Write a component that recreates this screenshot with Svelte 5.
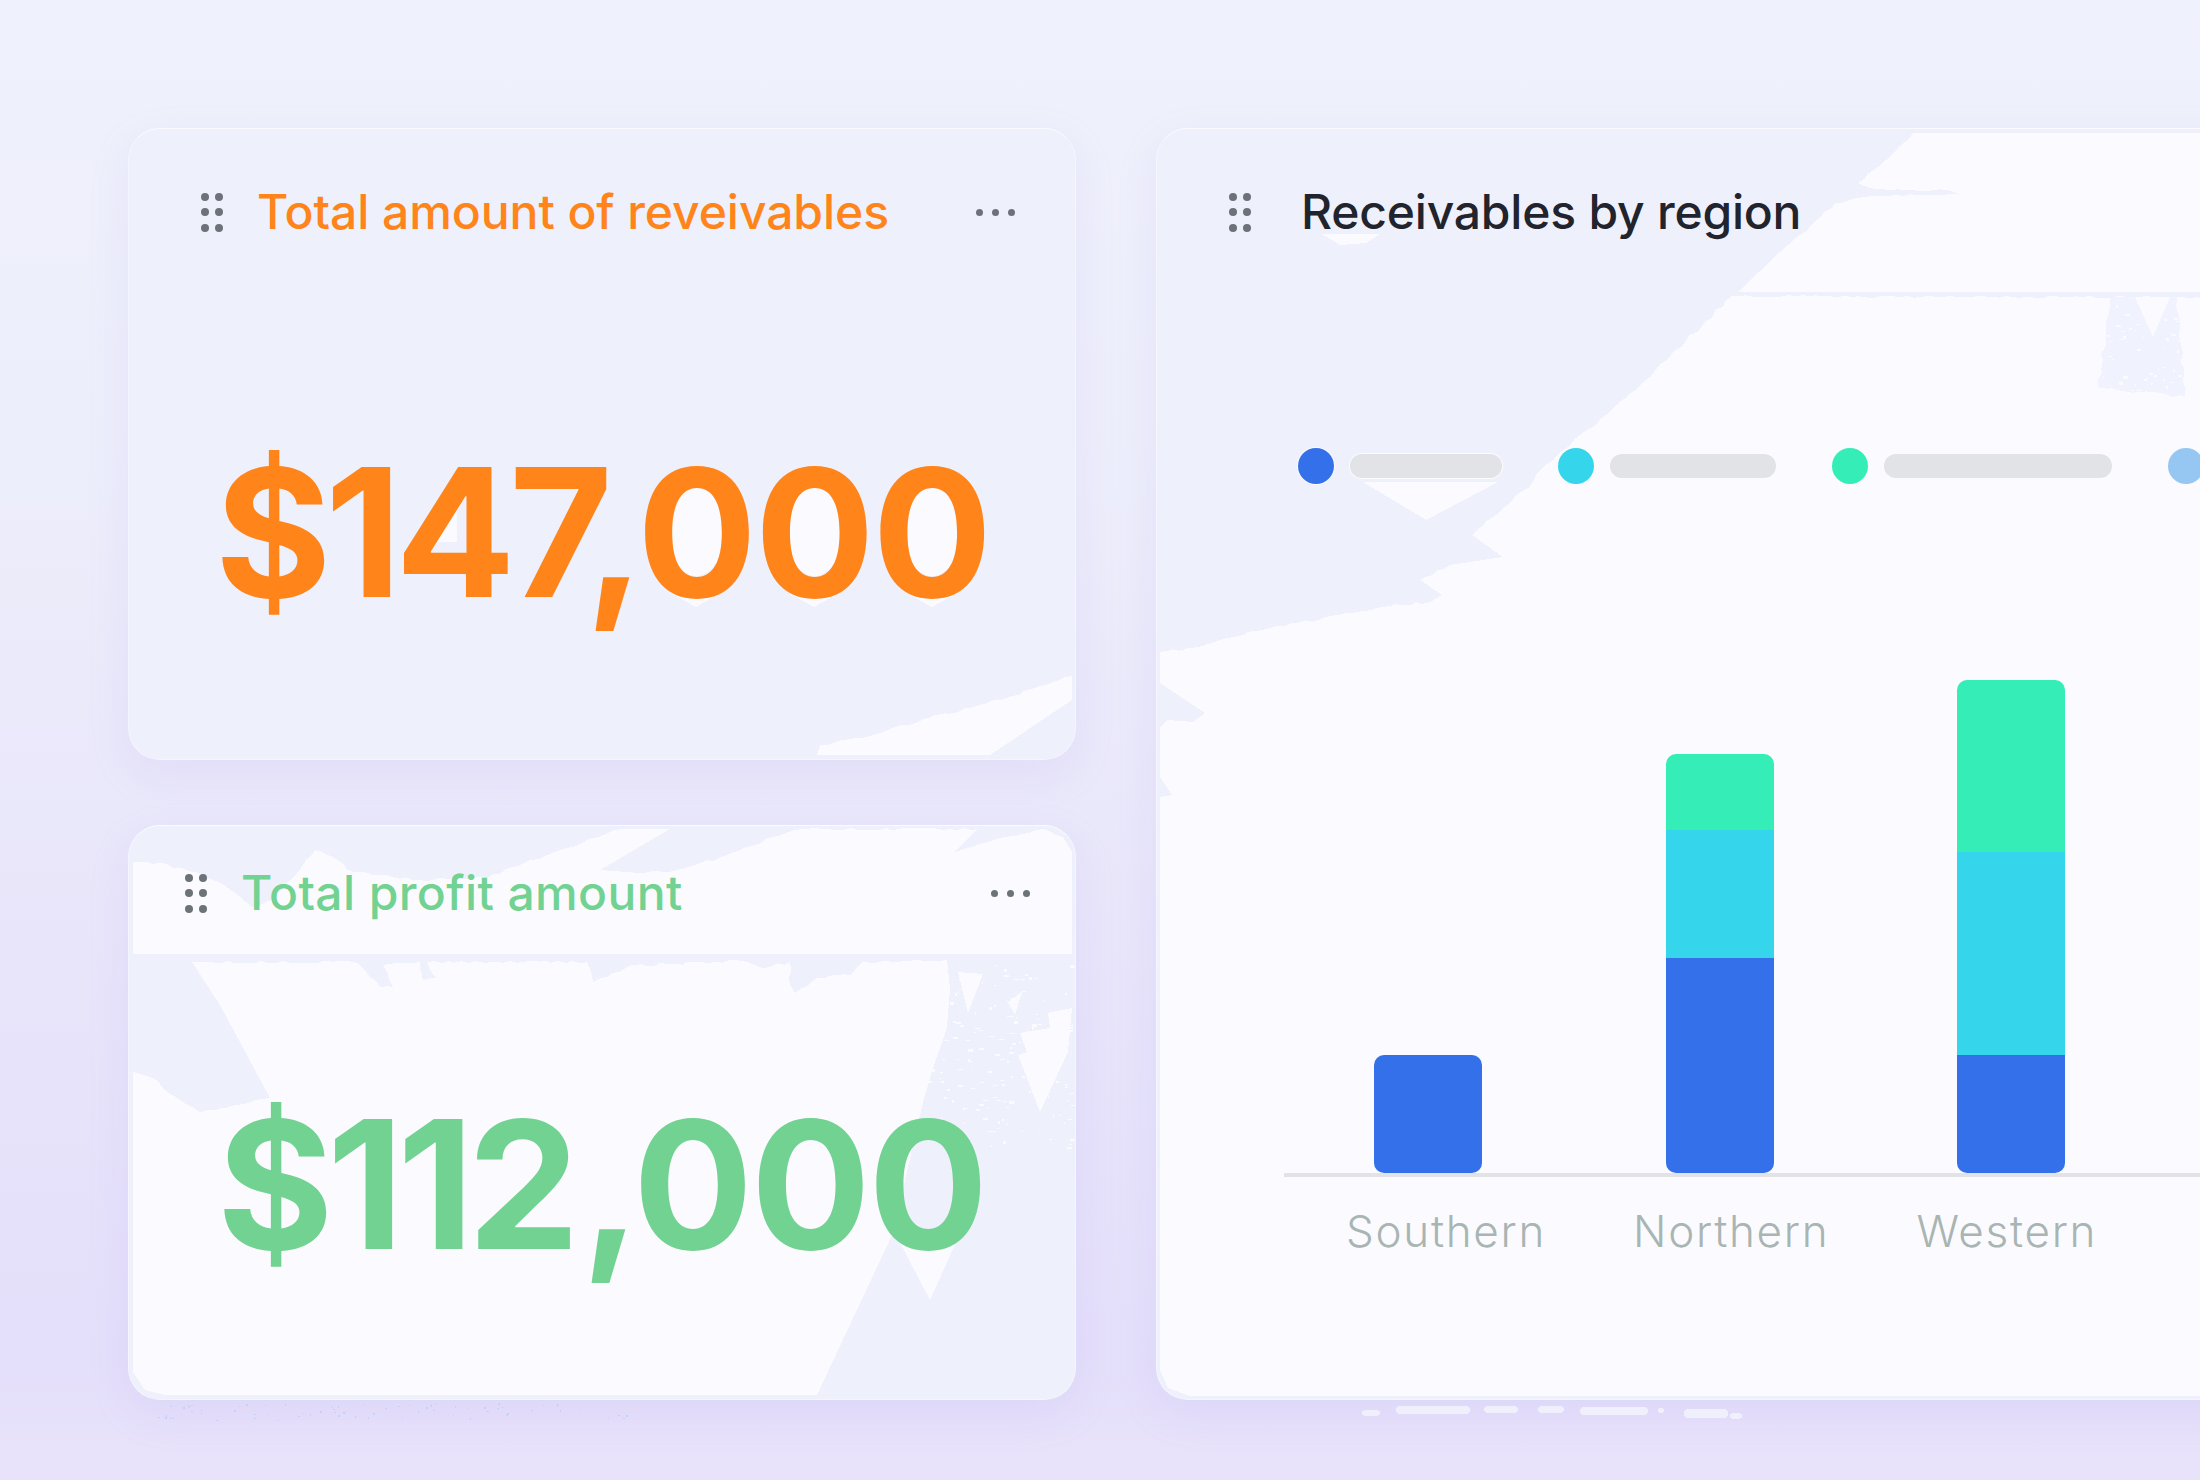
<script>
    // tiny seeded random so the torn edges stay the same on every render
    function rng(seed) {
        let s = seed;
        return () => {
            s = (s * 1664525 + 1013904223) % 4294967296;
            return s / 4294967296;
        };
    }

    function torn(points, amp, seed) {
        const r = rng(seed);
        const out = [];
        for (let i = 0; i < points.length - 1; i++) {
            const [x0, y0] = points[i];
            const [x1, y1] = points[i + 1];
            const len = Math.hypot(x1 - x0, y1 - y0);
            const steps = Math.max(1, Math.round(len / 7));
            for (let k = 0; k < steps; k++) {
                const t = k / steps;
                const j = k === 0 ? 0 : amp;
                out.push([x0 + (x1 - x0) * t + (r() - 0.5) * j, y0 + (y1 - y0) * t + (r() - 0.5) * j]);
            }
        }
        out.push(points[points.length - 1]);
        return out;
    }

    function poly(...parts) {
        return parts.flat().map((p) => p[0].toFixed(1) + "," + p[1].toFixed(1)).join(" ");
    }

    function specks(n, seed, inside, box) {
        const r = rng(seed);
        const out = [];
        while (out.length < n) {
            const x = box[0] + r() * (box[2] - box[0]);
            const y = box[1] + r() * (box[3] - box[1]);
            if (inside(x, y)) out.push({ x, y, w: 1 + Math.floor(r() * 5), h: 1 + Math.floor(r() * 2.5) });
        }
        return out;
    }

    // card 1
    const card1White = poly(
        torn([[817, 755], [820, 745], [870, 736], [929, 718], [1000, 700], [1072, 676]], 3, 11),
        [[1072, 700], [990, 755]]
    );
    const zeros = [696, 814, 932];

    // card 2
    const card2Head = poly(
        [[133, 954]],
        torn([[133, 862], [160, 863], [203, 875], [220, 883], [252, 907], [272, 900], [293, 878], [315, 850], [333, 857], [353, 872], [420, 880], [487, 878], [513, 867], [543, 857], [593, 838], [620, 829]], 3, 21),
        [[670, 829], [600, 870]],
        torn([[640, 873], [677, 870], [727, 855], [773, 837], [803, 829], [977, 829]], 3, 22),
        [[955, 852]],
        torn([[1000, 838], [1043, 829], [1063, 837], [1072, 852]], 3, 23),
        [[1072, 954]]
    );
    const card2Body = poly(
        torn([[192, 962], [353, 962], [363, 968], [380, 987], [393, 987], [383, 965], [420, 962], [423, 980], [437, 978], [427, 962], [587, 962], [593, 982], [633, 965], [743, 961], [763, 968], [790, 962], [790, 985], [795, 993], [817, 978], [850, 975], [863, 962], [947, 960]], 3, 24),
        [[950, 988], [947, 1028], [933, 1068], [923, 1102], [893, 1233], [817, 1395], [165, 1395], [145, 1390], [133, 1372]],
        torn([[133, 1072], [153, 1078], [177, 1098], [200, 1112], [270, 1098]], 3, 25),
        [[220, 1005]]
    );
    const card2Tris = [
        "897,1237 957,1240 930,1300",
        "958,972 983,974 968,1013",
        "1008,1002 1022,992 1015,1015",
        "1048,1013 1072,1008 1068,1052 1040,1112 1018,1055 1027,1052 1020,1033 1050,1028"
    ];
    const card2Specks = specks(170, 5, (x, y) => x > 950 - (y - 960) * 0.25, [915, 964, 1072, 1150]);
    const card2Under = specks(70, 9, () => true, [150, 1403, 630, 1420]);

    // card 3
    const card3Top = poly(
        torn([[1780, 252], [1800, 235], [1835, 203], [1865, 197], [1917, 195], [1958, 194], [1948, 190], [1877, 189], [1858, 183], [1890, 157], [1913, 133]], 2.5, 31),
        [[2210, 133], [2210, 292], [1738, 292]]
    );
    const card3Body = poly(
        torn([[2210, 297], [1900, 297], [1732, 296], [1640, 386], [1587, 430], [1537, 473], [1533, 482], [1472, 535]], 3, 32),
        [[1503, 557]],
        torn([[1450, 565], [1420, 580]], 3, 33),
        [[1442, 595]],
        torn([[1430, 602], [1377, 608], [1340, 615], [1270, 628], [1220, 640], [1193, 648], [1160, 652]], 3, 34),
        [[1160, 683], [1205, 713], [1193, 722], [1168, 720], [1160, 727], [1160, 777], [1172, 795], [1160, 797], [1160, 1370], [1168, 1388], [1190, 1396], [2210, 1396]]
    );
    const card3Patch = poly(torn([[2110, 297], [2098, 387], [2185, 397], [2177, 297]], 4, 35));
    const card3Specks = specks(60, 7, (x, y) => x > 2106 - (y - 297) * 0.1 && x < 2178 + (y - 297) * 0.05, [2098, 300, 2185, 390]);
    const card3Under = [[1362, 1410, 18, 6], [1396, 1406, 74, 8], [1484, 1406, 34, 7], [1538, 1406, 26, 7], [1580, 1407, 68, 8], [1658, 1408, 6, 5], [1684, 1409, 44, 9], [1730, 1413, 12, 6]];

    const legend = [
        { color: "#3470ea", width: 152 },
        { color: "#35d6eb", width: 166 },
        { color: "#34edb7", width: 228 },
        { color: "#96c7f2", width: 200 }
    ];

    const bars = [
        { name: "Southern", parts: [118] },
        { name: "Northern", parts: [215, 128, 76] },
        { name: "Western", parts: [118, 203, 172] }
    ];
    const partColors = ["#3470ea", "#35d6eb", "#34edb7"];
    const gripDots = [0, 1, 2, 3, 4, 5];
</script>

{#snippet grip()}
    <span class="grip">
        {#each gripDots as d}<i></i>{/each}
    </span>
{/snippet}

{#snippet more()}
    <span class="more"><i></i><i></i><i></i></span>
{/snippet}

<div class="page">
    <div class="left">
        <section class="card first">
            <svg class="tex" viewBox="128 128 948 632" aria-hidden="true">
                <polygon points={card1White} />
                {#each zeros as x}
                    <ellipse cx={x} cy="528" rx="30" ry="48" />
                    <polygon points="{x - 27},592 {x + 27},592 {x},607" />
                {/each}
                <polygon points="425,542 457,495 457,542" />
            </svg>
            <header class="head">
                {@render grip()}
                <h2 class="orange">Total amount of reveivables</h2>
                {@render more()}
            </header>
            <div class="amount orange">$147<span class="tail">,000</span></div>
        </section>

        <section class="card second">
            <svg class="tex" viewBox="128 825 948 575" aria-hidden="true">
                <polygon points={card2Head} />
                <polygon points={card2Body} />
                {#each card2Tris as t}<polygon points={t} />{/each}
                {#each card2Specks as s}<rect x={s.x} y={s.y} width={s.w} height={s.h} />{/each}
                {#each card2Under as s}<rect class="under" x={s.x} y={s.y} width="1.5" height="1.5" />{/each}
            </svg>
            <header class="head">
                {@render grip()}
                <h2 class="green">Total profit amount</h2>
                {@render more()}
            </header>
            <div class="amount green">$112<span class="tail">,000</span></div>
        </section>
    </div>

    <section class="card region">
        <svg class="tex" viewBox="1156 128 1100 1272" aria-hidden="true">
            <polygon points={card3Top} />
            <polygon points={card3Body} />
            <polygon class="patch" points={card3Patch} />
            <polygon points="2135,297 2170,297 2153,337" />
            {#each card3Specks as s}<rect x={s.x} y={s.y} width={s.w} height={s.h} />{/each}
            <polygon points="1363,482 1498,482 1426,520" />
            <polygon points="1322,234 1380,234 1366,243 1340,245" />
            {#each card3Under as u}<rect class="blob" x={u[0]} y={u[1]} width={u[2]} height={u[3]} rx="4" />{/each}
        </svg>
        <header class="head">
            {@render grip()}
            <h2 class="dark">Receivables by region</h2>
        </header>

        <div class="legend">
            {#each legend as item}
                <div class="legend-item">
                    <span class="dot" style="background: {item.color}"></span>
                    <span class="pill" style="width: {item.width}px"></span>
                </div>
            {/each}
        </div>

        <div class="bars">
            {#each bars as bar}
                <div class="bar">
                    {#each bar.parts as h, i}
                        <div style="height: {h}px; background: {partColors[i]}"></div>
                    {/each}
                </div>
            {/each}
        </div>
        <div class="labels">
            {#each bars as bar}<span>{bar.name}</span>{/each}
        </div>
    </section>
</div>

<style>
    :global(body) {
        margin: 0;
        background: #ebe6fa;
    }
    .page {
        width: 2200px;
        height: 1480px;
        box-sizing: border-box;
        padding: 128px 0 0 128px;
        display: flex;
        gap: 80px;
        overflow: hidden;
        font-family: Inter, "Liberation Sans", sans-serif;
        background: linear-gradient(180deg, #eff1fc 0%, #edeefb 30%, #e9e6fa 60%, #e4dffa 92%, #e9e3fa 100%);
    }
    .left {
        width: 948px;
        flex: none;
        display: flex;
        flex-direction: column;
        gap: 65px;
    }
    .card {
        position: relative;
        box-sizing: border-box;
        border-radius: 32px;
        background: #eef0fc;
        border: 1px solid #f4f5fe;
        border-top-color: #fbfbff;
        box-shadow: 0 14px 40px rgba(170, 155, 240, 0.14);
    }
    .first {
        height: 632px;
    }
    .second {
        height: 575px;
    }
    .region {
        width: 1100px;
        height: 1272px;
        flex: none;
    }
    .tex {
        position: absolute;
        left: -1px;
        top: -1px;
        width: calc(100% + 2px);
        height: calc(100% + 2px);
        overflow: visible;
        shape-rendering: crispEdges;
        fill: #fbfbff;
    }
    .tex .patch {
        fill: #f0f2fd;
    }
    .tex .under {
        fill: #c3d2f6;
    }
    .tex .blob {
        fill: #f0f0fc;
    }
    .head {
        position: relative;
        height: 166px;
        box-sizing: border-box;
        display: flex;
        align-items: center;
        gap: 34px;
        padding: 0 60px 0 72px;
    }
    .second .head {
        height: 130px;
        padding: 4px 45px 0 56px;
    }
    .region .head {
        padding-left: 72px;
        gap: 50px;
    }
    h2 {
        flex: 1;
        margin: 0;
        font-size: 48px;
        font-weight: 500;
        letter-spacing: -0.2px;
        line-height: 1;
        white-space: nowrap;
    }
    h2.orange {
        letter-spacing: -0.05px;
    }
    h2.green {
        letter-spacing: 0.4px;
    }
    .orange {
        color: #ff841a;
    }
    .green {
        color: #72d292;
    }
    .dark {
        color: #21242c;
    }
    .grip {
        flex: none;
        width: 22px;
        display: grid;
        grid-template-columns: 8px 8px;
        justify-content: space-between;
        row-gap: 7.5px;
    }
    .grip i {
        width: 8px;
        height: 8px;
        border-radius: 50%;
        background: #6b7278;
    }
    .more {
        flex: none;
        display: flex;
        gap: 9px;
    }
    .more i {
        width: 7px;
        height: 7px;
        border-radius: 50%;
        background: #6b7278;
    }
    .amount {
        position: relative;
        font-weight: 700;
        font-size: 178px;
        letter-spacing: -6.5px;
        line-height: 180px;
        white-space: nowrap;
    }
    .tail {
        letter-spacing: -2.4px;
    }
    .first .amount {
        margin: 148px 0 0 86px;
    }
    .first .tail {
        margin-left: -21px;
    }
    .second .amount {
        margin: 139px 0 0 88px;
    }
    .second .tail {
        margin-left: 8px;
    }
    .legend {
        position: relative;
        display: flex;
        gap: 56px;
        margin: 153px 0 0 141px;
    }
    .legend-item {
        display: flex;
        align-items: center;
        gap: 16px;
    }
    .dot {
        width: 36px;
        height: 36px;
        border-radius: 50%;
        box-shadow: 0 0 0 1px #fbfbff;
    }
    .pill {
        height: 24px;
        border-radius: 12px;
        background: #e1e3e6;
        box-shadow: 0 0 0 1px #fbfbff;
    }
    .bars {
        position: relative;
        height: 493px;
        margin: 196px 0 0 127px;
        padding-left: 90px;
        display: flex;
        align-items: flex-end;
        gap: 183.5px;
        border-bottom: 4px solid #e1e3e6;
    }
    .bar {
        width: 108px;
        display: flex;
        flex-direction: column-reverse;
        border-radius: 10px;
        overflow: hidden;
    }
    .labels {
        position: relative;
        display: flex;
        gap: 87px;
        margin: 27px 0 0 189px;
        font-size: 44px;
        font-weight: 300;
        letter-spacing: 1.7px;
        line-height: 54px;
        color: #a9b5b3;
    }
</style>
